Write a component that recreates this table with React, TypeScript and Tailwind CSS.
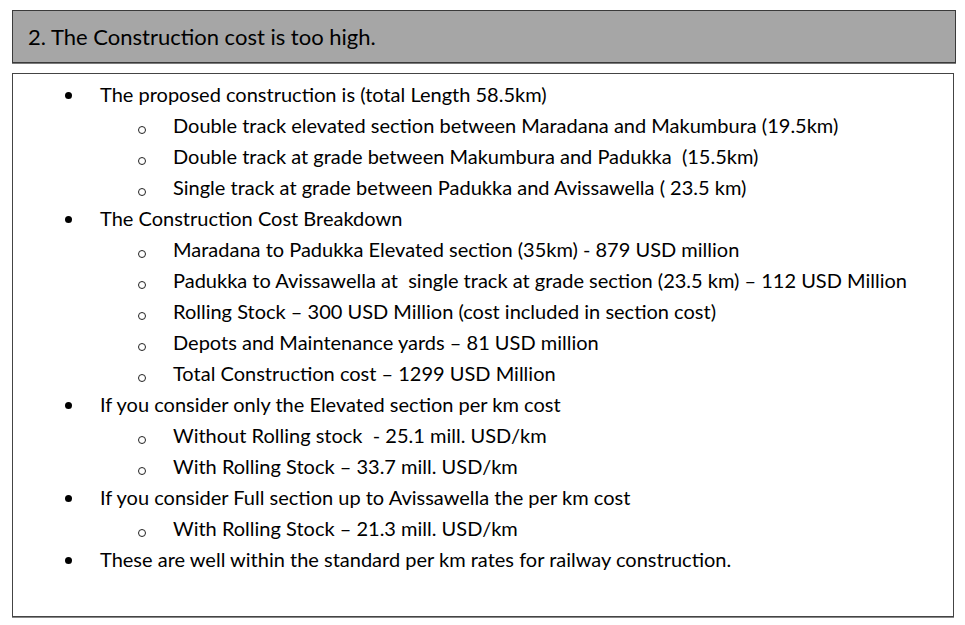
import React from "react";

type Item = { level: 0 | 1; text: string };

const items: Item[] = [
  { level: 0, text: "The proposed construction is (total Length 58.5km)" },
  { level: 1, text: "Double track elevated section between Maradana and Makumbura (19.5km)" },
  { level: 1, text: "Double track at grade between Makumbura and Padukka  (15.5km)" },
  { level: 1, text: "Single track at grade between Padukka and Avissawella ( 23.5 km)" },
  { level: 0, text: "The Construction Cost Breakdown" },
  { level: 1, text: "Maradana to Padukka Elevated section (35km) - 879 USD million" },
  { level: 1, text: "Padukka to Avissawella at  single track at grade section (23.5 km) \u2013 112 USD Million" },
  { level: 1, text: "Rolling Stock \u2013 300 USD Million (cost included in section cost)" },
  { level: 1, text: "Depots and Maintenance yards \u2013 81 USD million" },
  { level: 1, text: "Total Construction cost \u2013 1299 USD Million" },
  { level: 0, text: "If you consider only the Elevated section per km cost" },
  { level: 1, text: "Without Rolling stock  - 25.1 mill. USD/km" },
  { level: 1, text: "With Rolling Stock \u2013 33.7 mill. USD/km" },
  { level: 0, text: "If you consider Full section up to Avissawella the per km cost" },
  { level: 1, text: "With Rolling Stock \u2013 21.3 mill. USD/km" },
  { level: 0, text: "These are well within the standard per km rates for railway construction." },
];

function Row({ item }: { item: Item }) {
  if (item.level === 0) {
    return (
      <div className="flex h-[31px] leading-[31px]">
        <div className="ml-[52px] w-[35px] shrink-0">
          <div className="mt-[13px] h-[7px] w-[7px] rounded-full bg-black" />
        </div>
        <span className="whitespace-pre">{item.text}</span>
      </div>
    );
  }
  return (
    <div className="flex h-[31px] leading-[31px]">
      <div className="ml-[125px] w-[35px] shrink-0">
        <div className="mt-[16px] h-[8px] w-[8px] rounded-full border border-[#222]" />
      </div>
      <span className="whitespace-pre">{item.text}</span>
    </div>
  );
}

export default function App() {
  return (
    <div
      className="h-[625px] w-[965px] overflow-hidden bg-white pl-[12px] pt-[10px] text-black"
      style={{ fontFamily: "Lato, 'Open Sans', sans-serif" }}
    >
      <div className="flex h-[53px] w-[944px] items-center border border-[#3a3a3a] bg-[#a6a6a6] pl-[15px] text-[22px] shadow-[0_1px_0_#7a7a7a]">
        2. The Construction cost is too high.
      </div>
      <div className="mt-[10px] h-[544px] w-[942px] border border-[#444] pt-[5px] text-[20px] shadow-[0_1px_0_#888]">
        {items.map((it, i) => (
          <Row key={i} item={it} />
        ))}
      </div>
    </div>
  );
}
